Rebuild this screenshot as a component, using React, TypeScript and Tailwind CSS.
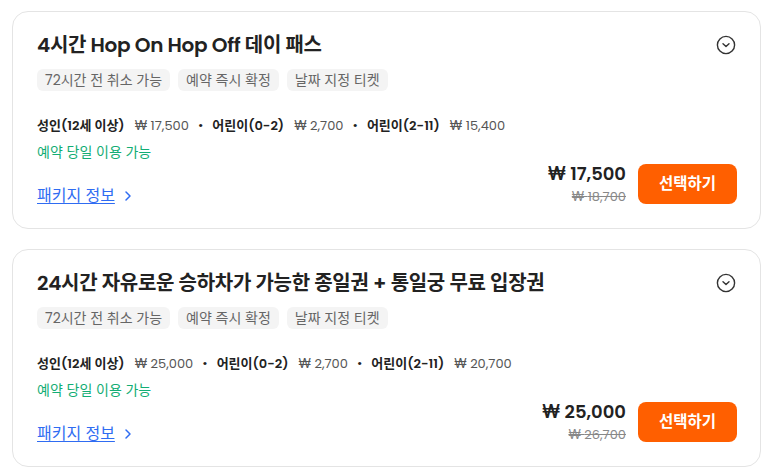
import React from 'react';

// Ticket package options list
const packages = [
    {
        title: '4시간 Hop On Hop Off 데이 패스',
        prices: [
            { label: '성인(12세 이상)', value: '17,500' },
            { label: '어린이(0-2)', value: '2,700' },
            { label: '어린이(2-11)', value: '15,400' },
        ],
        price: '17,500',
        original: '18,700',
    },
    {
        title: '24시간 자유로운 승하차가 가능한 종일권 + 통일궁 무료 입장권',
        prices: [
            { label: '성인(12세 이상)', value: '25,000' },
            { label: '어린이(0-2)', value: '2,700' },
            { label: '어린이(2-11)', value: '20,700' },
        ],
        price: '25,000',
        original: '26,700',
    },
];

const tags = ['72시간 전 취소 가능', '예약 즉시 확정', '날짜 지정 티켓'];

const ChevronCircle = () => (
    <svg width="20" height="20" viewBox="0 0 20 20" fill="none" stroke="#333" strokeWidth="1.4" strokeLinecap="round" strokeLinejoin="round">
        <circle cx="10" cy="10" r="8.6" />
        <path d="M7 8.8l3 2.8 3-2.8" />
    </svg>
);

export default function App() {
    return (
        <div className="bg-white w-[771px] h-[475px] pl-3 pr-[10px] pt-[11px] flex flex-col gap-5 font-['Poppins','Inter','Noto_Sans_CJK_KR',sans-serif]">
            {packages.map((pkg, i) => (
                <div key={i} className="border border-[#e4e4e4] rounded-2xl pl-6 pr-[23px] pt-[20px] pb-[22px] h-[218px] flex flex-col">
                    {/* Title row */}
                    <div className="flex justify-between items-center">
                        <h2 className="text-[20px] leading-[26px] font-semibold text-[#222] tracking-[-0.3px]">{pkg.title}</h2>
                        <div className="mr-[1px]"><ChevronCircle /></div>
                    </div>

                    {/* Tags */}
                    <div className="flex gap-2 mt-[11px]">
                        {tags.map((t) => (
                            <span key={t} className="bg-[#f4f4f4] text-[#666] text-[14px] leading-[22px] px-2 rounded-md">{t}</span>
                        ))}
                    </div>

                    {/* Per-person prices */}
                    <div className="flex items-center mt-[25px] text-[13px] leading-[20px]">
                        {pkg.prices.map((p, j) => (
                            <React.Fragment key={j}>
                                {j > 0 && <span className="mx-[9px] text-[#222]">•</span>}
                                <span className="font-semibold text-[#222]">{p.label}</span>
                                <span className="ml-[10px] text-[#555]">₩ {p.value}</span>
                            </React.Fragment>
                        ))}
                    </div>
                    <p className="mt-[6px] text-[14px] leading-[20px] text-[#12ad74]">예약 당일 이용 가능</p>

                    {/* Bottom row */}
                    <div className="mt-auto flex justify-between items-end">
                        <a href="#" className="flex items-center gap-[9px] text-[16px] leading-[22px] text-[#2f6cf2]">
                            <span className="underline underline-offset-2">패키지 정보</span>
                            <svg width="8" height="12" viewBox="0 0 8 12" fill="none" stroke="#2f6cf2" strokeWidth="1.5" strokeLinecap="round" strokeLinejoin="round">
                                <path d="M2 2l4 4-4 4" />
                            </svg>
                        </a>
                        <div className="flex items-center gap-3">
                            <div className="text-right">
                                <div className="text-[18px] leading-[24px] font-semibold text-[#222]">₩ {pkg.price}</div>
                                <div className="text-[13px] leading-[21px] text-[#888] line-through">₩ {pkg.original}</div>
                            </div>
                            <button className="bg-[#ff5f00] text-white font-semibold text-[15.5px] w-[99px] h-[40px] rounded-lg mb-[1px]">선택하기</button>
                        </div>
                    </div>
                </div>
            ))}
        </div>
    );
}
